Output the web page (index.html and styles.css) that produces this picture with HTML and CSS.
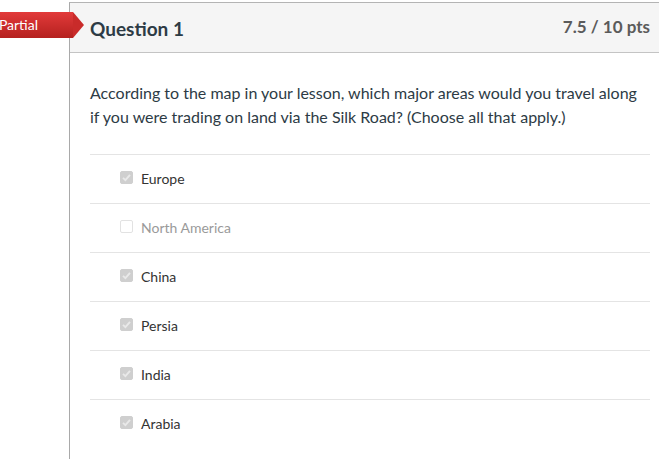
FILE: index.html
```html
<!DOCTYPE html>
<html>
<head>
<meta charset="utf-8">
<link rel="stylesheet" href="styles.css">
</head>
<body>
<div class="page">
  <div class="badge"><span class="badge-text">Partial</span></div>
  <div class="question">
    <div class="q-header">
      <h2 class="q-title">Question 1</h2>
      <div class="q-pts">7.5 / 10 pts</div>
    </div>
    <div class="q-body">
      <p class="q-text">According to the map in your lesson, which major areas would you travel along if you were trading on land via the Silk Road? (Choose all that apply.)</p>
      <ul class="answers">
        <li class="answer"><span class="cb checked"><svg viewBox="0 0 13 13" width="13" height="13"><path d="M3 6.8 L5.4 9.2 L10 3.8" fill="none" stroke="#e9e9e9" stroke-width="1.8"/></svg></span><span class="label">Europe</span></li>
        <li class="answer"><span class="cb"></span><span class="label muted">North America</span></li>
        <li class="answer"><span class="cb checked"><svg viewBox="0 0 13 13" width="13" height="13"><path d="M3 6.8 L5.4 9.2 L10 3.8" fill="none" stroke="#e9e9e9" stroke-width="1.8"/></svg></span><span class="label">China</span></li>
        <li class="answer"><span class="cb checked"><svg viewBox="0 0 13 13" width="13" height="13"><path d="M3 6.8 L5.4 9.2 L10 3.8" fill="none" stroke="#e9e9e9" stroke-width="1.8"/></svg></span><span class="label">Persia</span></li>
        <li class="answer"><span class="cb checked"><svg viewBox="0 0 13 13" width="13" height="13"><path d="M3 6.8 L5.4 9.2 L10 3.8" fill="none" stroke="#e9e9e9" stroke-width="1.8"/></svg></span><span class="label">India</span></li>
        <li class="answer"><span class="cb checked"><svg viewBox="0 0 13 13" width="13" height="13"><path d="M3 6.8 L5.4 9.2 L10 3.8" fill="none" stroke="#e9e9e9" stroke-width="1.8"/></svg></span><span class="label">Arabia</span></li>
      </ul>
    </div>
  </div>
</div>
</body>
</html>
```

FILE: styles.css
```css
html, body {
  margin: 0;
  padding: 0;
  background: #fff;
  overflow: hidden;
}
body {
  font-family: Lato, "Open Sans", sans-serif;
  width: 659px;
  height: 459px;
}
.page {
  position: relative;
  padding-top: 2px;
  height: 457px;
}
.badge {
  position: absolute;
  left: -40px;
  top: 12px;
  width: 113px;
  height: 26px;
  background: linear-gradient(#e23a3a, #b5211f);
  color: #fff;
  font-size: 14px;
  line-height: 25px;
  text-align: right;
  z-index: 2;
}
.badge::after {
  content: "";
  position: absolute;
  right: -11px;
  top: 0;
  width: 0;
  height: 0;
  border-top: 13px solid transparent;
  border-bottom: 13px solid transparent;
  border-left: 11px solid #c92b2a;
}
.badge-text {
  display: block;
  padding-right: 35px;
}
.question {
  margin-left: 69px;
  border-left: 1px solid #a9a9a9;
  border-top: 1px solid #b4b4b4;
  height: 456px;
}
.q-header {
  height: 49px;
  background: #f5f5f5;
  border-bottom: 1px solid #c4c4c4;
  display: flex;
  align-items: center;
  justify-content: space-between;
  padding: 0 9px 0 20px;
}
.q-title {
  margin: 2px 0 0;
  font-size: 19px;
  font-weight: 700;
  color: #2d3b45;
}
.q-pts {
  font-size: 17px;
  font-weight: 700;
  color: #5b5b5b;
  margin-top: -3px;
}
.q-body {
  padding: 28px 9px 0 20px;
}
.q-text {
  margin: 0 0 25px;
  font-size: 16px;
  line-height: 24px;
  color: #2d3b45;
}
.answers {
  list-style: none;
  margin: 0;
  padding: 0;
}
.answer {
  height: 48px;
  border-top: 1px solid #e4e4e4;
  display: flex;
  align-items: center;
  padding-left: 30px;
}
.cb {
  width: 13px;
  height: 13px;
  box-sizing: border-box;
  border: 1px solid #e2e2e2;
  border-radius: 2px;
  background: #fff;
  margin-right: 8px;
  margin-top: -4px;
  display: flex;
  position: relative;
}
.cb svg {
  position: absolute;
  left: -1px;
  top: -1px;
}
.cb.checked {
  background: #cfcfcf;
  border-color: #cfcfcf;
}
.label {
  font-size: 14px;
  color: #333;
  margin-top: -2px;
}
.label.muted {
  color: #9a9a9a;
}
```
